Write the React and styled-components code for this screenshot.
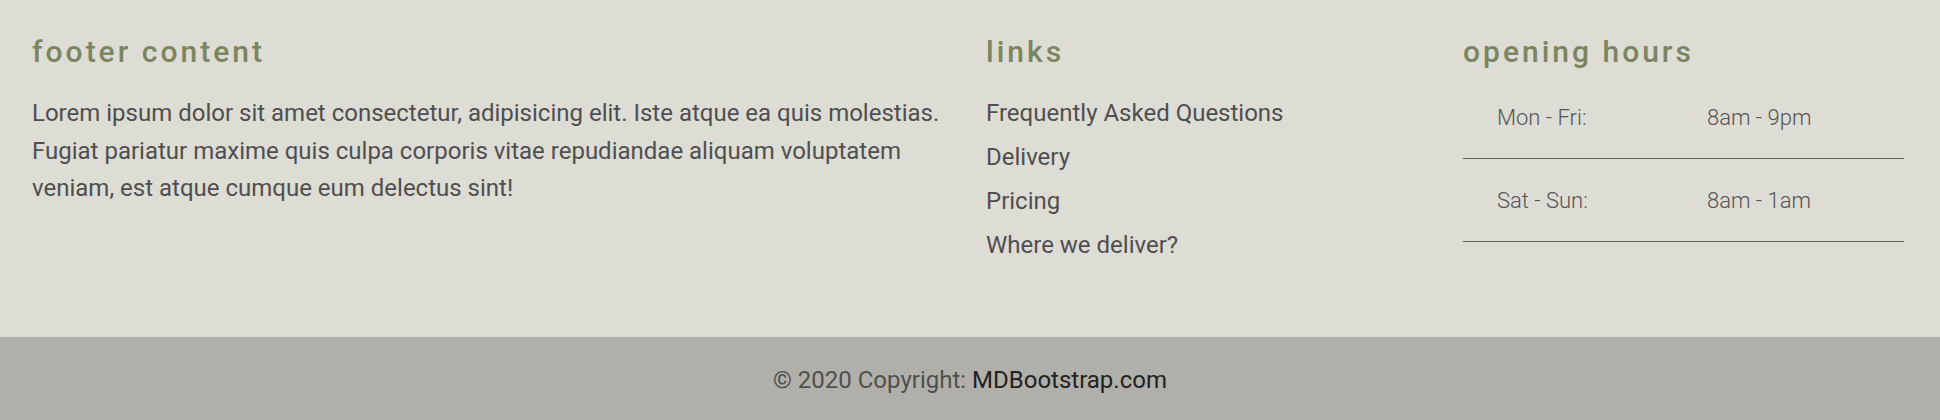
import React from 'react';
import styled, { createGlobalStyle } from 'styled-components';

const GlobalStyle = createGlobalStyle`
  html, body {
    margin: 0;
    padding: 0;
    background: #dddcd5;
  }
  body {
    font-family: Roboto, 'Liberation Sans', sans-serif;
  }
`;

const Footer = styled.footer`
  width: 1940px;
  height: 420px;
  display: flex;
  flex-direction: column;
  background: #dddcd5;
  color: #4f4f4f;
`;

const Top = styled.div`
  flex: 1;
  display: grid;
  grid-template-columns: 918px 441px 441px;
  column-gap: 36px;
  padding: 33px 0 0 32px;
`;

const Column = styled.section`
  display: flex;
  flex-direction: column;
`;

const Heading = styled.h5`
  margin: 0 0 20px;
  font-size: 30px;
  font-weight: 500;
  letter-spacing: 3px;
  line-height: 38px;
  color: #7b8560;
`;

const Text = styled.p`
  margin: 4px 0 0;
  font-size: 24px;
  line-height: 37.7px;
  color: #4f4f4f;
`;

const LinkList = styled.ul`
  list-style: none;
  margin: 0;
  padding: 0;
  display: flex;
  flex-direction: column;
`;

const LinkItem = styled.li`
  font-size: 24px;
  line-height: 44px;
  color: #4f4f4f;
`;

const Hours = styled.table`
  width: 100%;
  table-layout: fixed;
  border-collapse: collapse;
  margin-top: -16px;
`;

const Row = styled.tr`
  border-bottom: 1px solid #666;
`;

const Cell = styled.td`
  box-sizing: border-box;
  height: 83px;
  padding: 2px 0 0 34px;
  width: ${(p) => p.w || 'auto'};
  font-size: 22px;
  font-weight: 300;
  color: #555;
  vertical-align: middle;
`;

const Bottom = styled.div`
  height: 83px;
  display: flex;
  align-items: center;
  justify-content: center;
  padding-top: 3px;
  box-sizing: border-box;
  background: #b0afaa;
  font-size: 24px;
  color: #4f4f4f;
`;

const Brand = styled.a`
  color: #222;
  text-decoration: none;
`;

export default function App() {
  return (
    <>
      <GlobalStyle />
      <Footer>
        <Top>
          <Column>
            <Heading>footer content</Heading>
            <Text>
              Lorem ipsum dolor sit amet consectetur, adipisicing elit. Iste atque ea quis molestias.
              Fugiat pariatur maxime quis culpa corporis vitae repudiandae aliquam voluptatem veniam,
              est atque cumque eum delectus sint!
            </Text>
          </Column>
          <Column>
            <Heading>links</Heading>
            <LinkList>
              <LinkItem>Frequently Asked Questions</LinkItem>
              <LinkItem>Delivery</LinkItem>
              <LinkItem>Pricing</LinkItem>
              <LinkItem>Where we deliver?</LinkItem>
            </LinkList>
          </Column>
          <Column>
            <Heading>opening hours</Heading>
            <Hours>
              <tbody>
                <Row>
                  <Cell w="210px">Mon - Fri:</Cell>
                  <Cell>8am - 9pm</Cell>
                </Row>
                <Row>
                  <Cell w="210px">Sat - Sun:</Cell>
                  <Cell>8am - 1am</Cell>
                </Row>
              </tbody>
            </Hours>
          </Column>
        </Top>
        <Bottom>
          © 2020 Copyright:&nbsp;<Brand href="#">MDBootstrap.com</Brand>
        </Bottom>
      </Footer>
    </>
  );
}
